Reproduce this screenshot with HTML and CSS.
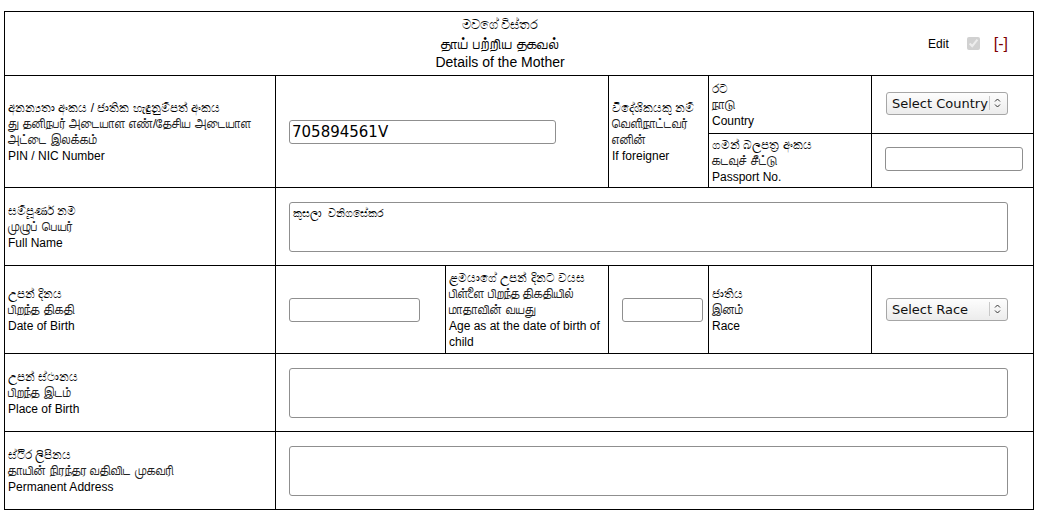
FILE: index.html
```html
<!DOCTYPE html>
<html lang="si">
<head>
  <meta charset="UTF-8">
  <title>Details of the Mother</title>
  <meta name="viewport" content="width=device-width, initial-scale=1.0" />
  <link rel="stylesheet" href="styles.css">
</head>
<body>

  <table class="form-table">
    <colgroup>
      <col class="c1"><col class="c2"><col class="c3"><col class="c4"><col class="c5"><col class="c6">
    </colgroup>
    <tr class="head-row">
      <td colspan="6">
        <div class="head">
          <div class="title">
            <div class="si">මවගේ විස්තර</div>
            <div class="ta">தாய் பற்றிய தகவல்</div>
            <div class="en">Details of the Mother</div>
          </div>
          <div class="tools">
            <span>Edit</span>
            <input type="checkbox" checked disabled>
            <a class="toggle">[-]</a>
          </div>
        </div>
      </td>
    </tr>

    <tr class="r-top">
      <td rowspan="2" class="label">
        <div class="si">අනන්‍යතා අංකය / ජාතික හැඳුනුම්පත් අංකය</div>
        <div class="ta">து தனிநபர் அடையாள எண்/தேசிய அடையாள அட்டை இலக்கம்</div>
        <div>PIN / NIC Number</div>
      </td>
      <td rowspan="2" colspan="2" class="field">
        <input type="text" class="pin" value="705894561V">
      </td>
      <td rowspan="2" class="label">
        <div class="si">විදේශිකයකු නම්</div>
        <div class="ta">வெளிநாட்டவர் எனின்</div>
        <div>If foreigner</div>
      </td>
      <td class="label">
        <div class="si">රට</div>
        <div class="ta">நாடு</div>
        <div>Country</div>
      </td>
      <td class="field">
        <div class="select-box">
          <select><option>Select Country</option></select>
          <svg class="arrows" width="16" height="20" viewBox="0 0 16 20">
            <line x1="0.5" y1="3" x2="0.5" y2="17" stroke="#c8c8c8"/>
            <path d="M6 8.5 L8.5 6 L11 8.5 M6 11.5 L8.5 14 L11 11.5" fill="none" stroke="#333" stroke-width="1"/>
          </svg>
        </div>
      </td>
    </tr>
    <tr class="r-bottom">
      <td class="label">
        <div class="si">ගමන් බලපත්‍ර අංකය</div>
        <div class="ta">கடவுச் சீட்டு</div>
        <div>Passport No.</div>
      </td>
      <td class="field">
        <input type="text" class="passport">
      </td>
    </tr>

    <tr class="r-name">
      <td class="label">
        <div class="si">සම්පූර්ණ නම</div>
        <div class="ta">முழுப் பெயர்</div>
        <div>Full Name</div>
      </td>
      <td colspan="5" class="field">
        <textarea class="name">කුසලා  වනිගසේකර</textarea>
      </td>
    </tr>

    <tr class="r-dob">
      <td class="label">
        <div class="si">උපන් දිනය</div>
        <div class="ta">பிறந்த திகதி</div>
        <div>Date of Birth</div>
      </td>
      <td class="field">
        <input type="text" class="dob">
      </td>
      <td class="label">
        <div class="si">ළමයාගේ උපන් දිනට වයස</div>
        <div class="ta">பிள்ளை பிறந்த திகதியில் மாதாவின் வயது</div>
        <div>Age as at the date of birth of child</div>
      </td>
      <td class="field">
        <input type="text" class="age">
      </td>
      <td class="label">
        <div class="si">ජාතිය</div>
        <div class="ta">இனம்</div>
        <div>Race</div>
      </td>
      <td class="field">
        <div class="select-box">
          <select><option>Select Race</option></select>
          <svg class="arrows" width="16" height="20" viewBox="0 0 16 20">
            <line x1="0.5" y1="3" x2="0.5" y2="17" stroke="#c8c8c8"/>
            <path d="M6 8.5 L8.5 6 L11 8.5 M6 11.5 L8.5 14 L11 11.5" fill="none" stroke="#333" stroke-width="1"/>
          </svg>
        </div>
      </td>
    </tr>

    <tr class="r-area">
      <td class="label">
        <div class="si">උපන් ස්ථානය</div>
        <div class="ta">பிறந்த இடம்</div>
        <div>Place of Birth</div>
      </td>
      <td colspan="5" class="field">
        <textarea></textarea>
      </td>
    </tr>

    <tr class="r-area">
      <td class="label">
        <div class="si">ස්ථිර ලිපිනය</div>
        <div class="ta">தாயின் நிரந்தர வதிவிட முகவரி</div>
        <div>Permanent Address</div>
      </td>
      <td colspan="5" class="field">
        <textarea></textarea>
      </td>
    </tr>
  </table>

</body>
</html>
```

FILE: styles.css
```css
body {
  margin: 0;
  font-family: "Liberation Sans", Arial, sans-serif;
  font-size: 12px;
  color: #000;
  background: #fff;
}
.form-table {
  margin: 11px 0 0 4px;
  width: 1030px;
  border-collapse: collapse;
  table-layout: fixed;
}
.form-table td {
  border: 1px solid #000;
  padding: 0 3px;
  vertical-align: middle;
}
.c1 { width: 271px; }
.c2 { width: 170px; }
.c3 { width: 163px; }
.c4 { width: 100px; }
.c5 { width: 163px; }
.c6 { width: 162px; }

.head-row { height: 64px; }
.head {
  display: flex;
  align-items: center;
}
.title {
  flex: 1;
  text-align: center;
  padding-left: 64px;
  font-size: 14px;
  line-height: 19px;
}
.title .si { font-size: 13px; }
.title .ta { font-size: 15px; }
.tools {
  display: flex;
  align-items: center;
  gap: 10px;
  padding-right: 22px;
  font-size: 12px;
}
.tools input {
  margin: 0 4px 0 8px;
  width: 13px;
  height: 13px;
}
.toggle {
  color: #800000;
  font-size: 16px;
}

.label {
  line-height: 16px;
}
.label .si { font-size: 12px; }
.label .ta { font-size: 13px; color: #222; }

.form-table td.field { padding-left: 13px; }

.r-top { height: 58px; }
.r-bottom { height: 54px; }
.r-name { height: 78px; }
.r-dob { height: 88px; }
.r-area { height: 78px; }

input[type="text"], textarea {
  box-sizing: border-box;
  border: 1px solid #8f8f8f;
  border-radius: 3px;
  font-family: "DejaVu Sans", sans-serif;
  font-size: 15px;
  padding: 1px 2px;
  height: 24px;
  display: block;
}
.pin { width: 267px; }
.passport { width: 138px; margin: 0 0 3px 0; }
.dob { width: 131px; }
.age { width: 81px; }
textarea {
  width: 719px;
  height: 50px;
  resize: none;
  font-family: "Liberation Sans", Arial, sans-serif;
  font-size: 11px;
  padding: 4px 3px;
}

.select-box {
  position: relative;
  width: 122px;
  margin-left: 1px;
}
.r-top .select-box { margin-bottom: 3px; }
.select-box select {
  appearance: none;
  -webkit-appearance: none;
  width: 122px;
  height: 23px;
  box-sizing: border-box;
  border: 1px solid #a6a6a6;
  border-radius: 3px;
  background: linear-gradient(#fdfdfd, #ececec);
  font-family: "DejaVu Sans", sans-serif;
  font-size: 13px;
  color: #111;
  padding: 0 16px 0 5px;
  display: block;
}
.arrows {
  position: absolute;
  right: 3px;
  top: 1px;
  pointer-events: none;
}
```
